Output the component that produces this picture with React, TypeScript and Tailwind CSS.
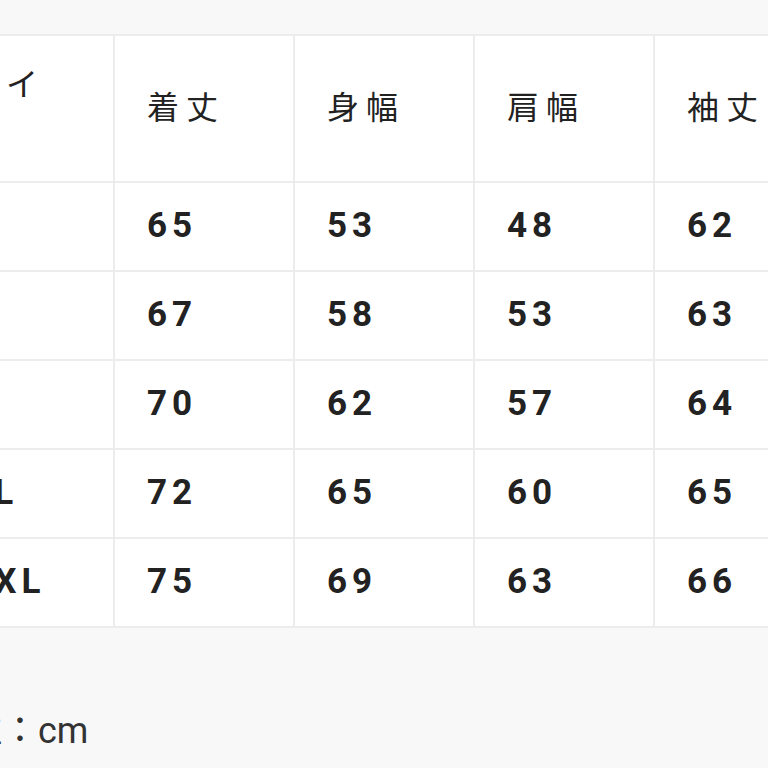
const headers = ["サイズ", "着丈", "身幅", "肩幅", "袖丈"];

const rows = [
  ["S", "65", "53", "48", "62"],
  ["M", "67", "58", "53", "63"],
  ["L", "70", "62", "57", "64"],
  ["XL", "72", "65", "60", "65"],
  ["XXL", "75", "69", "63", "66"],
];

export default function App() {
  return (
    <div
      className="w-[768px] h-[768px] overflow-hidden bg-[#f8f8f8] text-[#222]"
      style={{ fontFamily: "Roboto, 'Noto Sans CJK JP', sans-serif" }}
    >
      <div className="pt-[34px] -ml-[67px] w-max">
        {/* size table */}
        <div className="grid grid-cols-[178px_178px_178px_178px_178px] gap-[2px] p-[2px] bg-[#ececec]">
          {headers.map((h) => (
            <div
              key={h}
              className="bg-white h-[145px] pl-[32px] pr-[32px] flex items-center text-[32px] leading-[1.45] tracking-[7px] font-normal"
            >
              <span className="max-w-[108px]">{h}</span>
            </div>
          ))}
          {rows.map((row) =>
            row.map((v, i) => (
              <div
                key={row[0] + i}
                className="bg-white h-[87px] pl-[32px] pr-[32px] flex items-center text-[35px] font-bold tracking-[5px]"
              >
                {v}
              </div>
            ))
          )}
        </div>
      </div>

      <p className="mt-[76px] -ml-[70px] text-[36px] leading-[1.5] text-[#333] font-normal">
        単位：cm
      </p>
    </div>
  );
}
